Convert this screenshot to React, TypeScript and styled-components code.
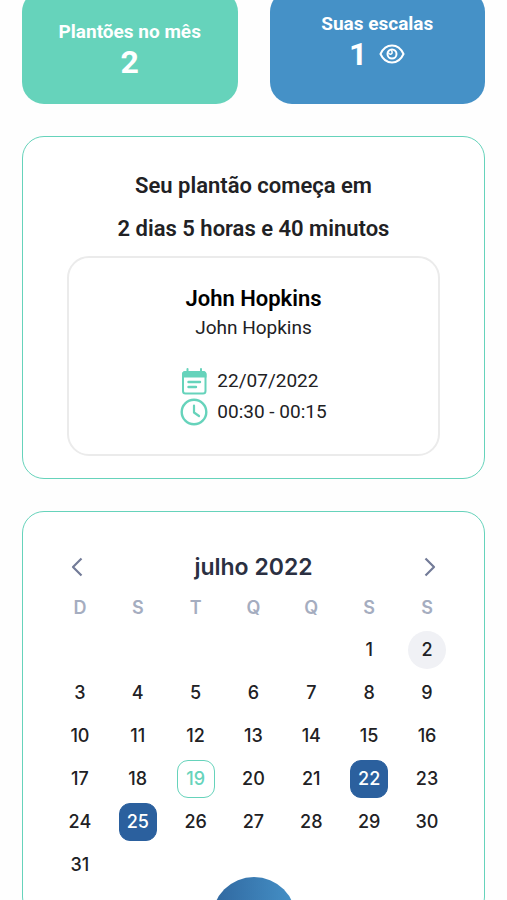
import React from 'react';
import styled, { createGlobalStyle } from 'styled-components';

const mint = '#66d3bb';
const blue = '#4591c7';
const navy = '#2b609e';

const GlobalStyle = createGlobalStyle`
  *, *::before, *::after { box-sizing: border-box; }
  body {
    margin: 0;
    background: #fefefe;
    color: #212124;
    font-family: Roboto, "Liberation Sans", sans-serif;
    overflow-x: hidden;
  }
  button { font: inherit; color: inherit; }
  h1, h2, h3, p { margin: 0; }
`;

const Page = styled.main`
  display: flex;
  flex-direction: column;
  gap: 32px;
  padding: 0 22px;
  margin-top: -10px;
`;

const Stats = styled.section`
  display: grid;
  grid-template-columns: 1fr 1fr;
  gap: 32px;
`;

const StatCard = styled.div<{ $color: string; $top: number }>`
  display: flex;
  flex-direction: column;
  align-items: center;
  min-height: 114px;
  padding: ${(p) => p.$top}px 12px 12px;
  border-radius: 22px;
  background: ${(p) => p.$color};
  color: #fff;
`;

const StatLabel = styled.h2`
  font-size: 19px;
  line-height: 24px;
  font-weight: 700;
`;

const StatValue = styled.p`
  display: flex;
  align-items: center;
  gap: 12px;
  font-size: 32px;
  line-height: 36px;
  font-weight: 700;
`;

const EyeButton = styled.button`
  display: flex;
  padding: 0;
  border: 0;
  background: none;
  cursor: pointer;
`;

const Panel = styled.section`
  border: 1px solid ${mint};
  border-radius: 22px;
  background: #fff;
`;

const ShiftPanel = styled(Panel)`
  padding: 27px 44px 22px;
`;

const Countdown = styled.h2`
  font-size: 22px;
  line-height: 43px;
  font-weight: 600;
  text-align: center;
`;

const ShiftCard = styled.article`
  display: flex;
  flex-direction: column;
  align-items: center;
  margin-top: 6px;
  padding: 26px 16px 27px;
  border: 2px solid #ebebeb;
  border-radius: 22px;
`;

const ShiftName = styled.h3`
  font-size: 22px;
  line-height: 30px;
  font-weight: 600;
  color: #000;
`;

const ShiftPlace = styled.p`
  font-size: 19px;
  line-height: 28px;
`;

const ShiftDetails = styled.div`
  display: flex;
  flex-direction: column;
  margin-top: 23px;
`;

const Detail = styled.p`
  display: flex;
  align-items: center;
  gap: 9px;
  height: 31px;
  font-size: 19px;
  line-height: 31px;

  svg {
    color: ${mint};
  }
`;

const CalendarPanel = styled(Panel)`
  padding: 33px 28px 32px;
  font-family: Inter, "Liberation Sans", sans-serif;
`;

const MonthBar = styled.header`
  display: flex;
  align-items: center;
  justify-content: space-between;
  height: 44px;
  padding: 0 10px;
`;

const MonthTitle = styled.h2`
  font-size: 23px;
  line-height: 32px;
  font-weight: 600;
  color: #2b3042;
`;

const ArrowButton = styled.button`
  display: flex;
  align-items: center;
  justify-content: center;
  width: 32px;
  height: 32px;
  padding: 0;
  border: 0;
  background: none;
  color: #737b98;
  cursor: pointer;
`;

const Month = styled.table`
  width: 100%;
  table-layout: fixed;
  border-collapse: collapse;
`;

const Weekday = styled.th`
  height: 39px;
  padding: 0 0 2px;
  font-size: 18px;
  font-weight: 600;
  color: #a5adc0;
`;

const DayCell = styled.td`
  height: 43px;
  padding: 0;
`;

type DayKind = 'plain' | 'weekend' | 'today' | 'shift';

const dayLook: Record<DayKind, string> = {
  plain: '',
  weekend: 'background: #f0f1f5; border-radius: 50%;',
  today: `border-color: ${mint}; color: ${mint};`,
  shift: `background: ${navy}; border-color: ${navy}; color: #fff;`,
};

const Day = styled.button<{ $kind: DayKind }>`
  display: flex;
  align-items: center;
  justify-content: center;
  width: 38px;
  height: 38px;
  margin: 0 auto;
  padding: 0;
  border: 1px solid transparent;
  border-radius: 11px;
  background: none;
  font-size: 18px;
  font-weight: 500;
  cursor: pointer;
  ${(p) => dayLook[p.$kind]}
`;

const FloatingButton = styled.button`
  position: fixed;
  left: 50%;
  bottom: -61px;
  width: 84px;
  height: 84px;
  margin-left: -42px;
  border: 0;
  border-radius: 50%;
  background: linear-gradient(90deg, #30679f, #4591c7);
  cursor: pointer;
`;

const Arrow = ({ next }: { next?: boolean }) => (
  <svg width="12" height="20" viewBox="0 0 12 20" fill="none" stroke="currentColor" strokeWidth="2.2" strokeLinejoin="round" aria-hidden="true">
    <path d={next ? 'M1.5 1.5 10 10l-8.500 8.500' : 'M10.500 1.500 2 10l8.500 8.500'} />
  </svg>
);

const Eye = () => (
  <svg width="26" height="22" viewBox="0 0 26 22" fill="none" stroke="currentColor" strokeWidth="2" aria-hidden="true">
    <path d="M1.500 11C4 5.500 8 2.500 13 2.500S22 5.500 24.500 11C22 16.500 18 19.500 13 19.500S4 16.500 1.500 11Z" />
    <circle cx="13" cy="11" r="4.500" />
    <path d="M9.500 9.500c.3 2 3 2.400 3.600.5.300-1-.1-2-.9-2.800" strokeWidth="1.500" />
  </svg>
);

const EventNote = () => (
  <svg width="28" height="28" viewBox="0 0 28 28" fill="none" stroke="currentColor" strokeWidth="2" strokeLinecap="round" aria-hidden="true">
    <rect x="3" y="5" width="22.500" height="21.500" rx="2.500" />
    <path d="M2 7.500A3.500 3.500 0 0 1 5.500 4H23a3.500 3.500 0 0 1 3.500 3.500V10.500H2Z" fill="currentColor" stroke="none" />
    <path d="M7.500 2v3M21 2v3" />
    <path d="M8.500 15h11.500M8.500 20h7.500" strokeWidth="2.400" />
  </svg>
);

const Clock = () => (
  <svg width="28" height="28" viewBox="0 0 28 28" fill="none" stroke="currentColor" strokeWidth="2.400" strokeLinecap="round" aria-hidden="true">
    <circle cx="14" cy="14" r="12.300" />
    <path d="M14 7.500v7l5 3.500" strokeWidth="2.200" strokeLinejoin="round" />
  </svg>
);

const weekdays = [
  ['D', 'domingo'],
  ['S', 'segunda'],
  ['T', 'terça'],
  ['Q', 'quarta'],
  ['Q', 'quinta'],
  ['S', 'sexta'],
  ['S', 'sábado'],
];

const firstColumn = 5;
const daysInMonth = 31;
const weeks = Array.from({ length: 6 }, (_, week) =>
  Array.from({ length: 7 }, (_, column) => week * 7 + column - firstColumn + 1),
);
const kinds: Record<number, DayKind> = { 2: 'weekend', 19: 'today', 22: 'shift', 25: 'shift' };

export default function App() {
  return (
    <>
      <GlobalStyle />
      <Page>
        <Stats>
          <StatCard $color={mint} $top={30}>
            <StatLabel>Plantões no mês</StatLabel>
            <StatValue>2</StatValue>
          </StatCard>
          <StatCard $color={blue} $top={22}>
            <StatLabel>Suas escalas</StatLabel>
            <StatValue>
              1
              <EyeButton type="button" aria-label="Ver escalas">
                <Eye />
              </EyeButton>
            </StatValue>
          </StatCard>
        </Stats>

        <ShiftPanel>
          <Countdown>
            Seu plantão começa em
            <br />2 dias 5 horas e 40 minutos
          </Countdown>
          <ShiftCard>
            <ShiftName>John Hopkins</ShiftName>
            <ShiftPlace>John Hopkins</ShiftPlace>
            <ShiftDetails>
              <Detail>
                <EventNote />
                22/07/2022
              </Detail>
              <Detail>
                <Clock />
                00:30 - 00:15
              </Detail>
            </ShiftDetails>
          </ShiftCard>
        </ShiftPanel>

        <CalendarPanel>
          <MonthBar>
            <ArrowButton type="button" aria-label="Mês anterior">
              <Arrow />
            </ArrowButton>
            <MonthTitle>julho 2022</MonthTitle>
            <ArrowButton type="button" aria-label="Próximo mês">
              <Arrow next />
            </ArrowButton>
          </MonthBar>
          <Month>
            <thead>
              <tr>
                {weekdays.map(([letter, name]) => (
                  <Weekday key={name} scope="col" abbr={name}>
                    {letter}
                  </Weekday>
                ))}
              </tr>
            </thead>
            <tbody>
              {weeks.map((days, week) => (
                <tr key={week}>
                  {days.map((day) => (
                    <DayCell key={day}>
                      {day > 0 && day <= daysInMonth && (
                        <Day type="button" $kind={kinds[day] ?? 'plain'}>
                          {day}
                        </Day>
                      )}
                    </DayCell>
                  ))}
                </tr>
              ))}
            </tbody>
          </Month>
        </CalendarPanel>
      </Page>
      <FloatingButton type="button" aria-label="Adicionar" />
    </>
  );
}
